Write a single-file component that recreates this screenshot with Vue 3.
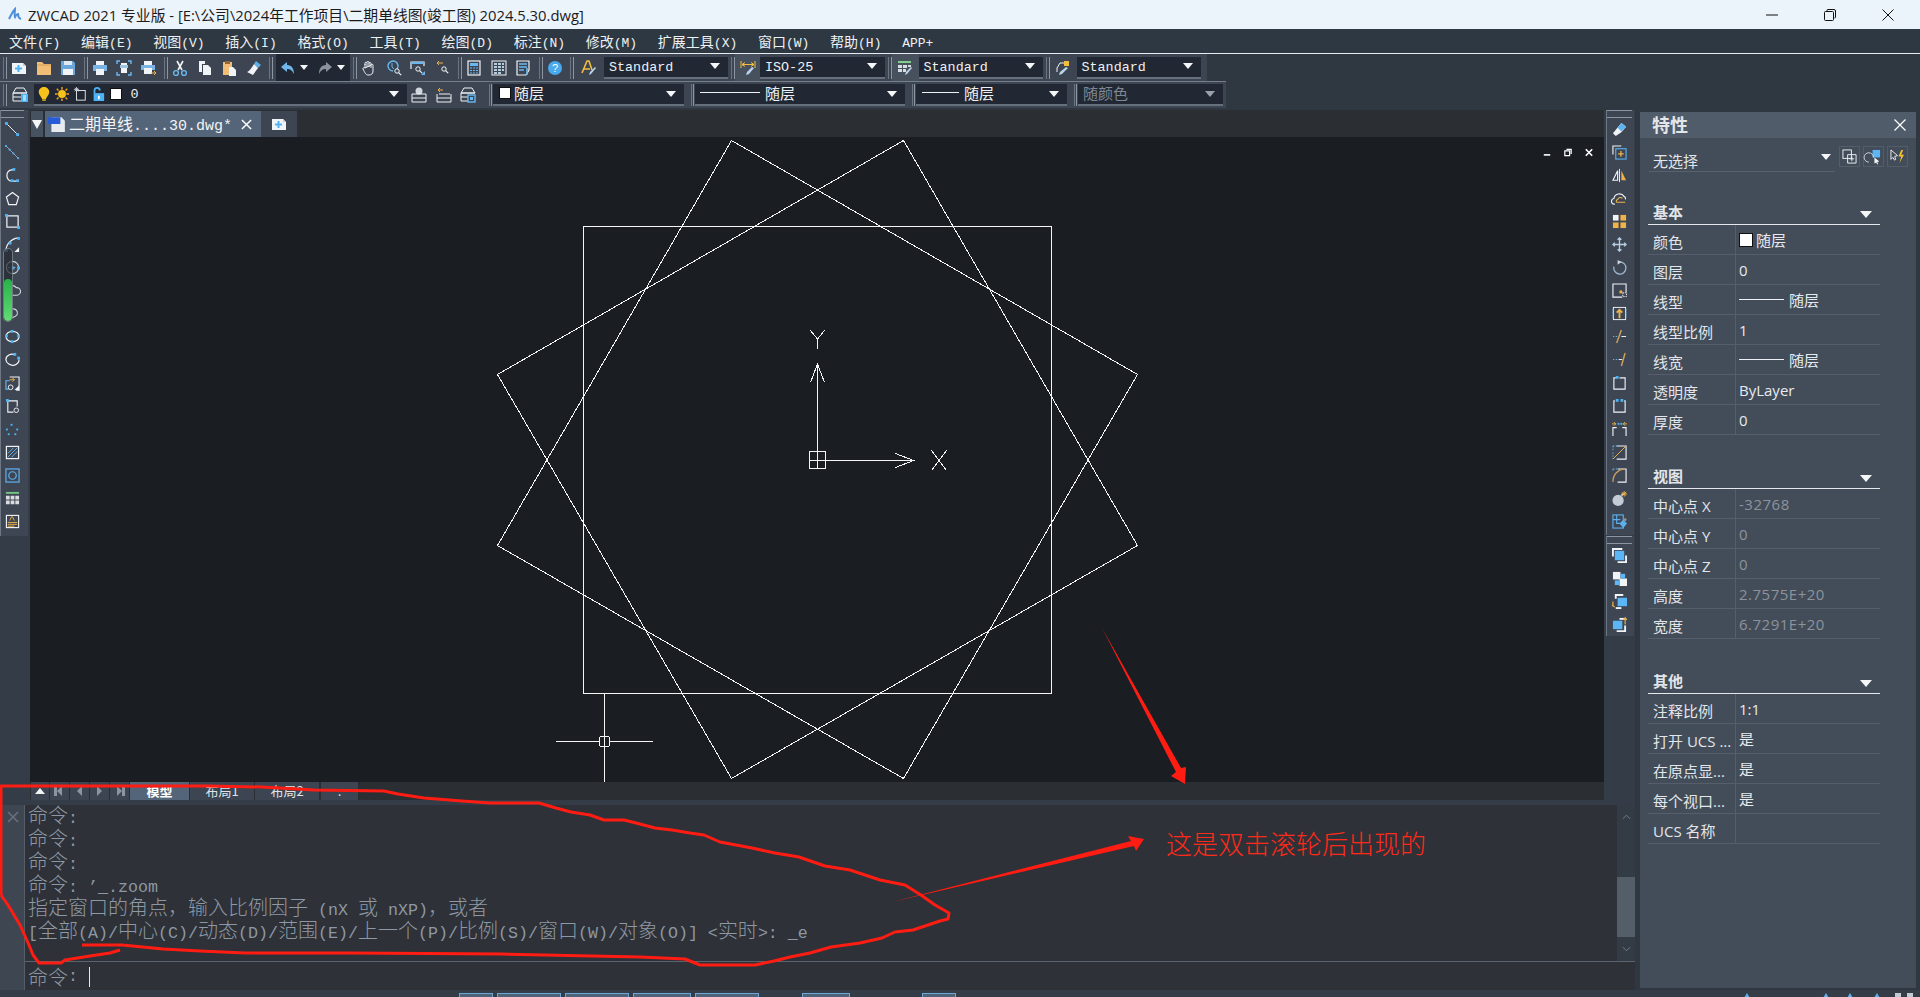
<script setup>
import { h } from 'vue'

const T = (p) =>
  (p.s.match(/[\u2E80-\uFFEF]+|[^\u2E80-\uFFEF]+/g) || []).map((t) =>
    h('span', { class: /[\u2E80-\uFFEF]/.test(t) ? 'cj' : 'la' }, t)
  )
T.props = ['s']

const W = '#f1f4f7'
const B = '#4db3f5'
const A = '#efb24a'
const S = (c = W, w = 1) => `fill="none" stroke="${c}" stroke-width="${w}"`
const dot = (x, y, c = B, s = 3) => `<rect x="${x}" y="${y}" width="${s}" height="${s}" fill="${c}"/>`

const brush = `<path d="M15 8l-5 6-2 1 1-3 5-5z" fill="#b9d3ea"/>`
const lens = (x, y, c = W) => `<circle cx="${x}" cy="${y}" r="2.2" ${S(c)}/><path d="M${x + 1.6} ${y + 1.6}l2.6 2.6" ${S(c, 1.2)}/>`

const icons = {
  new: `<path d="M1 3h11l3 3v8H1z" fill="${W}"/><path d="M12 3v3h3" fill="#c4ccd4"/><path d="M7.5 5v7M4 8.5h7" stroke="${B}" stroke-width="2"/>`,
  open: `<path d="M1 2h5l2 2h7v11H1z" fill="#f2bd76"/><path d="M1 5h14" stroke="#d69d54"/>`,
  save: `<path d="M1 1h12l2 2v12H1z" fill="#6aa6da"/><rect x="4" y="1" width="8" height="4" fill="#dfe9f2"/><rect x="3" y="9" width="10" height="6" fill="${W}"/>`,
  print: `<rect x="4" y="1" width="8" height="4" fill="${W}"/><rect x="1" y="5" width="14" height="6" fill="#79b4e4"/><rect x="4" y="9" width="8" height="6" fill="${W}"/>`,
  preview: `<path d="M1 4V1h3M12 1h3v3M1 12v3h3M12 15h3v-3" ${S('#6ab8ef', 1.4)}/><rect x="5" y="3" width="6" height="2" fill="${W}"/><rect x="4" y="5" width="8" height="3" fill="#9fc5e4"/><rect x="5" y="8" width="6" height="5" fill="${W}"/>`,
  plot: `<rect x="3" y="1" width="8" height="4" fill="${W}"/><rect x="0" y="5" width="14" height="5" fill="#79b4e4"/><rect x="3" y="8" width="8" height="6" fill="${W}"/><path d="M10 13h5m-2-2l2 2-2 2" ${S(A)}/>`,
  cut: `<path d="M5 1l5 9M11 1L6 10" ${S(W, 1.6)}/><circle cx="4" cy="13" r="2.4" ${S('#6ab8ef', 1.4)}/><circle cx="12" cy="13" r="2.4" ${S('#6ab8ef', 1.4)}/>`,
  copy: `<path d="M2 1h6v3H5v8H2z" fill="${W}"/><path d="M6 5h5l3 3v7H6z" fill="${W}"/>`,
  paste: `<rect x="2" y="2" width="9" height="13" fill="#f2bd76"/><rect x="4" y="1" width="5" height="3" fill="#8e6a3a"/><path d="M8 7h4l3 3v6H8z" fill="${W}"/>`,
  match: `<path d="M10 1l5 4-3 3-4-4z" fill="#5eaee8"/><path d="M8 4l4 4-5 7-6-3c3-1 5-5 7-8z" fill="${W}"/>`,
  undo: `<path d="M7 2L1 7l6 5V9c3 0 5 1 7 5 0-5-2-9-7-9z" fill="#6fb7ec"/>`,
  redo: `<path d="M9 2l6 5-6 5V9c-3 0-5 1-7 5 0-5 2-9 7-9z" fill="#8a929c"/>`,
  pan: `<path d="M4 8V4m0 1V3.2a1 1 0 012 0V7m0-4.5a1 1 0 012 0V7m0-3.5a1 1 0 012 0V8m0-2.8a1 1 0 012 0V11c0 3-2 4-4 4H7c-2 0-3-2-5-6-.5-1 1-2 2-1z" ${S()}/>`,
  zoomrt: `<path d="M11 9a5 5 0 10-4 2" ${S('#6ab8ef', 1.4)}/><path d="M6 3v4l2 2" ${S('#6ab8ef')}/>${lens(11, 11)}`,
  zoomw: `<path d="M1 9V2h13v4" ${S(W, 1.2)}/><path d="M1 2h13v2H1z" fill="#6ab8ef"/>${lens(8, 9)}<path d="M15 11v4h-4z" fill="#6ab8ef"/>`,
  zoomp: `<path d="M2 3h6M4 1L2 3l2 2" ${S(A)}/>${lens(9, 9)}`,
  calc: `<rect x="2" y="1" width="12" height="14" ${S(W, 1.2)}/><rect x="4" y="3" width="8" height="3" fill="#6ab8ef"/><path d="M4 8h8M4 10.5h8M4 13h8" stroke="#6ab8ef" stroke-dasharray="2 1"/>`,
  tool: `<rect x="1" y="1" width="14" height="14" ${S(W, 1)}/><path d="M3 3h3v2H3zM7 3h3v2H7zM11 3h2v2h-2zM3 6h3v2H3zM7 6h3v2H7zM11 6h2v2h-2zM3 9h3v2H3zM7 9h3v2H7zM11 9h2v2h-2zM3 12h3v2H3zM7 12h3v2H7z" fill="#b7cee0"/>`,
  prop: `<path d="M2 1h12v9l-3 5H2z" ${S(W, 1.2)}/><path d="M4 4h8M4 7h8M4 10h5" stroke="#6ab8ef" stroke-width="1.4"/><path d="M12 8v7" ${S('#6ab8ef', 1.6)}/>`,
  help: `<circle cx="8" cy="8" r="7" fill="#4aa8ec"/><text x="8" y="12" font-size="11" text-anchor="middle" fill="#fff" font-family="Liberation Sans">?</text>`,
  tstyle: `<path d="M1 13L6 1h2l3 9M3 9h6" ${S('#f3bd3f', 1.6)}/>${brush}`,
  dstyle: `<path d="M1 1v7M15 1v7M2 4.5h12M2 4.5l3-2M2 4.5l3 2M14 4.5l-3-2M14 4.5l-3 2" ${S('#f3bd3f')}/><path d="M14 8l-5 6-3 1 1-3 5-5z" fill="#b9d3ea"/>`,
  table: `<rect x="1" y="1" width="13" height="2" fill="#7fd08a"/><path d="M1 5h4v3H1zM6 5h4v3H6zM1 9h4v3H1zM6 9h3v3H6zM11 5h3v2h-3z" fill="#d8dde2"/>${brush}`,
  mlstyle: `<rect x="9" y="1" width="5" height="5" fill="#f3bd3f"/><path d="M9 3H5L2 8v4" ${S()}/><path d="M13 8l-6 6-3 1 1-3 6-5z" fill="#b9d3ea"/>`,
  layer: `<path d="M4 1h8l3 5H1zM1 6h14M1 10h8M1 14h8M1 6v8" ${S(W)}/><rect x="9" y="7" width="7" height="8" fill="#4db3f5"/><path d="M11 9h3M11 11h3M11 13h3" stroke="#fff"/>`,
  layerm: `<circle cx="8" cy="4" r="3.5" fill="#cfd6dd"/><path d="M1 7h14M1 11h14M1 15h14M1 7v8M15 7v8" ${S(W)}/>`,
  layerp: `<path d="M7 3H2m2-2L2 3l2 2" ${S(A)}/><path d="M3 7h11M1 11h14M1 15h14M1 7v8M15 7v8" ${S(W)}/>`,
  layers: `<path d="M4 1h8l3 5H1zM1 6h14M1 10h7M1 14h7M1 6v8" ${S(W)}/><rect x="8" y="8" width="7" height="7" ${S('#6ab8ef', 1.4)}/><rect x="10" y="10" width="3" height="3" fill="#6ab8ef"/>`,
  bulb: `<path d="M8 0c4 0 6 3 6 6 0 3-3 5-4 8H6C5 11 2 9 2 6c0-3 2-6 6-6z" fill="#f6c21c"/><rect x="6" y="14" width="4" height="2" fill="#c99a10"/>`,
  sun: `<circle cx="8" cy="8" r="4.5" fill="#f6c21c"/><path d="M8 0v3M8 13v3M0 8h3M13 8h3M2 2l2 2M12 12l2 2M14 2l-2 2M4 12l-2 2" stroke="#f6a21c" stroke-width="1.6"/>`,
  vp: `<rect x="4" y="4" width="10" height="11" ${S()}/><path d="M4 0v6M1 3h6M2 1l4 4M6 1L2 5" stroke="#cfd6dd"/>`,
  lock: `<path d="M4 7V4a3 3 0 016 0" ${S('#4db3f5', 2)}/><rect x="3" y="7" width="12" height="9" fill="#4db3f5"/><rect x="8" y="10" width="2" height="4" fill="#fff"/>`,

  l1: `<path d="M2 2l12 12" ${S()}/>${dot(0, 0)}${dot(12, 12)}`,
  l2: `<path d="M0 0l15 15" ${S('#bcd0e0', 0.7)}/>${dot(0, 0, B, 2)}${dot(4, 4, B, 2)}${dot(8, 8, B, 2)}${dot(13, 13, B, 2)}`,
  l3: `<path d="M9 2H7C4 2 2 5 2 8s2 6 5 6h6" ${S(W, 1.3)}/>${dot(8, 0)}${dot(6, 12)}${dot(12, 12)}`,
  l4: `<path d="M8 1.5l6.5 5-2.5 8H4l-2.5-8z" ${S(W, 1.3)}/>`,
  l5: `<rect x="2" y="2" width="12" height="12" ${S(W, 1.3)}/>${dot(0, 0)}${dot(13, 13)}`,
  l6: `<path d="M1 15C1 8 6 2 14 1" ${S(W, 1.3)}/>${dot(0, 13)}${dot(4, 5)}${dot(13, 0)}<path d="M15 11v5h-5z" fill="${W}"/>`,
  l7: `<circle cx="8" cy="8" r="6.5" ${S('#cfd6dd', 1.2)}/><path d="M3 8h10" stroke="${B}" stroke-dasharray="3 2"/>${dot(7, 7)}${dot(13, 7)}`,
  l8: `<path d="M3 13a3 3 0 010-6 5 5 0 019-2 4 4 0 011 8z" ${S('#cfd6dd', 1.2)}/>`,
  l9: `<path d="M3 3h6c3 0 5 3 4 6s-5 3-8 4" ${S('#cfd6dd', 1.2)}/>${dot(6, 2, B, 2)}`,
  l10: `<ellipse cx="8" cy="8" rx="7" ry="5.5" ${S(W, 1.3)}/>${dot(6, 1)}${dot(0, 6)}${dot(13, 6)}${dot(6, 12)}`,
  l11: `<path d="M11 3C6 1 1 4 1 8s5 7 9 6c3-1 5-3 5-6" ${S(W, 1.3)}/>${dot(9, 1)}${dot(13, 5)}`,
  l12: `<path d="M5 1h10v14h-3" ${S(W, 1.2)}/><path d="M5 5H1v9h3" ${S('#6ab8ef', 1.2)}/><path d="M5 4h5m-2-2l2 2-2 2" ${S(A)}/><circle cx="6" cy="12" r="2.5" ${S()}/><path d="M15 10v5h-5z" fill="${W}"/>`,
  l13: `<path d="M3 2h10v6M3 2v12h6" ${S(W, 1.2)}/>${dot(1, 0)}<circle cx="12" cy="12" r="2.4" ${S()}/>`,
  l14: `${dot(6, 2, B, 2)}${dot(1, 7, B, 2)}${dot(12, 7, B, 2)}${dot(3, 12, B, 2)}${dot(10, 12, B, 2)}`,
  l15: `<rect x="1.5" y="1.5" width="13" height="13" ${S(W, 1.3)}/><path d="M3 9l6-6M3 13L13 3M7 13l6-6" stroke="#6ab8ef"/>`,
  l16: `<rect x="1" y="1" width="14" height="14" ${S('#5cb0ee', 1.3)}/><circle cx="8" cy="8" r="4" ${S('#5cb0ee', 1.3)}/>`,
  l17: `<rect x="1" y="1" width="14" height="2" fill="#74c485"/><path d="M1 5h4v4H1zM6 5h4v4H6zM11 5h4v4h-4zM1 10h4v4H1zM6 10h4v4H6zM11 10h4v4h-4z" fill="#d9dde1"/>`,
  l18: `<rect x="1.5" y="1.5" width="13" height="13" ${S(W, 1.2)}/><path d="M5 7l2-4h1l2 4M3 9h10M3 11h10M3 13h7" ${S(A)}/>`,

  r1: `<path d="M10 1l5 4-5 6-6 4-3-3z" fill="${W}"/><path d="M10 1l5 4-5 5-4-4z" fill="#5eb4f2"/>`,
  r2: `<path d="M1 10V1h9" ${S(W, 1.2)}/><rect x="4" y="4" width="11" height="11" ${S('#5cb0ee', 1.2)}/><path d="M9.5 6.5v6M6.5 9.5h6" stroke="${A}" stroke-width="1.4"/>`,
  r3: `<path d="M1 13L6 3v10z" ${S(W, 1.2)}/><path d="M8 1v14" ${S()}/><path d="M10 3l5 10h-5z" fill="${A}"/>`,
  r4: `<path d="M3 14a3 3 0 01-1-6 6 6 0 0111-2c1 0 2 2 1 3" ${S(W, 1.2)}/><path d="M5 12c-1-1 0-3 1-3 1-2 4-3 5-1M5 12h9" ${S(A, 1.2)}/>`,
  r5: `<rect x="1" y="1" width="6" height="6" fill="${W}"/><rect x="9" y="1" width="6" height="6" fill="${A}"/><rect x="1" y="9" width="6" height="6" fill="${A}"/><rect x="9" y="9" width="6" height="6" fill="${A}"/>`,
  r6: `<path d="M8 1v14M1 8h14M6 3l2-2 2 2M6 13l2 2 2-2M3 6L1 8l2 2M13 6l2 2-2 2" ${S('#b6cde2', 1.4)}/>`,
  r7: `<path d="M8 2a6.5 6.5 0 11-6 5" ${S('#9fb7cf', 1.4)}/><path d="M6 0l4 2-4 3z" fill="#cfd8e1"/>`,
  r8: `<path d="M11 15H1V1h14v9" ${S(W, 1.2)}/>${dot(8, 8, A, 3)}<rect x="11.5" y="10.5" width="4" height="4" fill="none" stroke="${W}" stroke-dasharray="1.5 1"/>`,
  r9: `<rect x="1.5" y="1.5" width="13" height="13" fill="none" stroke="${W}"/><path d="M1 3v10M15 3v10" stroke="#6ab8ef" stroke-dasharray="2 1"/><path d="M8 13V5M5 7l3-3 3 3" ${S(A, 2)}/>`,
  r10: `<path d="M1 8h5" stroke="#6ab8ef" stroke-dasharray="1.5 1.5"/><path d="M10 8h5" ${S()}/><path d="M5 15L10 1" ${S('#c99f5c', 1.6)}/>`,
  r11: `<path d="M1 8h6" stroke="#6ab8ef" stroke-dasharray="1.5 1.5"/><path d="M7 8h4" ${S()}/><path d="M10 15L14 1" ${S('#c99f5c', 1.6)}/>`,
  r12: `<path d="M4 2H2v12h12V2H8" ${S(W, 1.2)}/>${dot(4, 0, B, 3)}`,
  r13: `<path d="M3 2H2v12h12V2h-1" ${S(W, 1.2)}/>${dot(4, 0, B, 3)}${dot(9, 0, B, 3)}`,
  r14: `<path d="M1 15V6h4M15 15V6h-4" ${S(W, 1.2)}/><path d="M0 2h4M2 0l2 2-2 2M16 2h-4M14 0l-2 2 2 2" ${S(A)}/>${dot(6, 1, B, 2)}${dot(9, 1, B, 2)}`,
  r15: `<path d="M5 15h10V1H5" ${S(W, 1.2)}/><path d="M1 1h6M1 1v6" stroke="#6ab8ef" stroke-dasharray="1.5 1.5"/><path d="M1 15L15 1" ${S(A)}/><path d="M1 8v7" stroke="#6ab8ef" stroke-dasharray="1.5 1.5"/>`,
  r16: `<path d="M6 15h9V1H6" ${S(W, 1.2)}/><path d="M1 1h8M1 1v3" stroke="#6ab8ef" stroke-dasharray="1.5 1.5"/><path d="M1 15C1 7 6 2 13 1" ${S('#c99f5c', 1.4)}/>`,
  r17: `<circle cx="6.5" cy="10" r="6" fill="#c3cbd4"/><path d="M10 5l2-2" stroke="#c3cbd4" stroke-width="2"/><path d="M13 0v6M10 3h6M11 1l4 4M15 1l-4 4" stroke="${A}"/>`,
  r18: `<rect x="1" y="1" width="11" height="14" ${S('#5cb0ee', 1.2)}/><path d="M1 6h8M5 1v9h4" ${S('#5cb0ee', 1.2)}/><path d="M8 10l4-4 4 4-4 5z" fill="#5cb0ee"/><path d="M12 6l2-2 2 2-2 2z" fill="#8a929c"/>`,
  o1: `<path d="M1 9V1h10" ${S(W, 2)}/><path d="M6 15h9V8" ${S(W, 2)}/><rect x="3" y="3" width="10" height="10" fill="#5cb6f6"/>`,
  o2: `<rect x="1" y="1" width="8" height="8" fill="${W}"/><rect x="8" y="8" width="8" height="8" fill="${W}"/><rect x="9" y="3" width="5" height="5" fill="#5cb6f6"/><rect x="3" y="10" width="5" height="5" fill="#5cb6f6"/>`,
  o3: `<path d="M4 5V1h8" ${S(W, 2)}/><path d="M4 15h6" ${S(W, 2)}/><rect x="6" y="4" width="10" height="9" fill="#5cb6f6"/><path d="M1 8v5m-1-1l3 2" ${S(A, 1.2)}/>`,
  o4: `<rect x="1" y="4" width="10" height="9" fill="#5cb6f6"/><path d="M5 15h9V9" ${S(W, 2)}/><path d="M8 2h6" ${S(W, 2)}/><path d="M14 8V1l-2 2m2-2l2 2" ${S(A, 1.2)}/>`,
  b1: `<rect x="1" y="1" width="9" height="9" ${S()}/><path d="M6 6h9v9H6z" ${S()}/><path d="M10.5 8v5M8 10.5h5" ${S()}/>`,
  b2: `<rect x="7" y="1" width="8" height="8" fill="#5cb6f6"/><path d="M8 9a5 5 0 10-5 5" ${S('#cfd6dd')}/><path d="M9 9l5 4-2 1 1 2-1 .5-1-2-2 1z" fill="${W}"/>`,
  b3: `<path d="M1 1l7 6-3 1 1 3-1 1-2-3-2 2z" ${S(W, 1)}/><path d="M12 1l-3 7h3l-2 7 5-9h-3l2-5z" fill="#f3c12c"/>`
}

const menus = ['文件(F)', '编辑(E)', '视图(V)', '插入(I)', '格式(O)', '工具(T)', '绘图(D)', '标注(N)', '修改(M)', '扩展工具(X)', '窗口(W)', '帮助(H)', 'APP+']
const leftTools = Array.from({ length: 18 }, (_, i) => 'l' + (i + 1))
const rightTools = Array.from({ length: 18 }, (_, i) => 'r' + (i + 1))
const orderTools = ['o1', 'o2', 'o3', 'o4']
const log = ['命令:', '命令:', '命令:', "命令: ’_.zoom", '指定窗口的角点，输入比例因子 (nX 或 nXP)，或者', '[全部(A)/中心(C)/动态(D)/范围(E)/上一个(P)/比例(S)/窗口(W)/对象(O)] <实时>: _e']
const sections = [
  { title: '基本', rows: [
    { k: '颜色', v: '随层', swatch: true },
    { k: '图层', v: '0' },
    { k: '线型', v: '随层', line: true },
    { k: '线型比例', v: '1' },
    { k: '线宽', v: '随层', line: true },
    { k: '透明度', v: 'ByLayer' },
    { k: '厚度', v: '0' }
  ] },
  { title: '视图', rows: [
    { k: '中心点 X', v: '-32768', dim: true },
    { k: '中心点 Y', v: '0', dim: true },
    { k: '中心点 Z', v: '0', dim: true },
    { k: '高度', v: '2.7575E+20', dim: true },
    { k: '宽度', v: '6.7291E+20', dim: true }
  ] },
  { title: '其他', rows: [
    { k: '注释比例', v: '1:1' },
    { k: '打开 UCS ...', v: '是' },
    { k: '在原点显...', v: '是' },
    { k: '每个视口...', v: '是' },
    { k: 'UCS 名称', v: '' }
  ] }
]
const statusBtns = [
  { w: 34, m: 459 }, { w: 64, m: 4 }, { w: 64, m: 4 }, { w: 58, m: 4 }, { w: 64, m: 4 }, { w: 48, m: 43 }, { w: 34, m: 72 }
]
const statusTips = [
  { m: 788 }, { m: 73 }, { m: 18 }, { m: 21 }, { m: 15, grey: true }, { m: 6, grey: true }
]
</script>

<template>
  <div class="page">
    <header class="title">
      <svg class="logo" viewBox="0 0 16 16">
        <path d="M2 12C4 8 6 4 8 2c0 3-1 6 0 8 1-2 2-3 3-3 0 2 0 4 3 5" fill="none" stroke="#4f8fd8" stroke-width="2" />
      </svg>
      <span class="title-text">ZWCAD 2021 专业版 - [E:\公司\2024年工作项目\二期单线图(竣工图) 2024.5.30.dwg]</span>
      <div class="win-btns">
        <svg viewBox="0 0 12 12" class="win"><path d="M0 6h12" stroke="#111" /></svg>
        <svg viewBox="0 0 12 12" class="win"><rect x=".5" y="2.5" width="9" height="9" rx="1" fill="none" stroke="#111" /><path d="M3 2.5V1.5a1 1 0 011-1h6a1.500 1.500 0 011.500 1.500v6a1 1 0 01-1 1" fill="none" stroke="#111" /></svg>
        <svg viewBox="0 0 12 12" class="win"><path d="M.5.5l11 11M11.500.5l-11 11" stroke="#111" /></svg>
      </div>
    </header>

    <nav class="menubar">
      <span v-for="m in menus" :key="m" class="menu-item"><T :s="m" /></span>
    </nav>

    <section class="toolbars">
      <div class="row row1">
        <i class="grip first"></i>
        <span v-for="n in ['new','open','save']" :key="n" class="cell"><svg class="ic" viewBox="0 0 16 16" v-html="icons[n]"></svg></span>
        <i class="grip"></i>
        <span v-for="n in ['print','preview','plot']" :key="n" class="cell"><svg class="ic" viewBox="0 0 16 16" v-html="icons[n]"></svg></span>
        <i class="grip"></i>
        <span v-for="n in ['cut','copy','paste','match']" :key="n" class="cell"><svg class="ic" viewBox="0 0 16 16" v-html="icons[n]"></svg></span>
        <i class="grip"></i>
        <div class="undo">
          <svg class="ic" viewBox="0 0 16 16" v-html="icons.undo"></svg><b class="tri small"></b>
          <svg class="ic redo" viewBox="0 0 16 16" v-html="icons.redo"></svg><b class="tri small"></b>
        </div>
        <i class="grip"></i>
        <span v-for="n in ['pan','zoomrt','zoomw','zoomp']" :key="n" class="cell"><svg class="ic" viewBox="0 0 16 16" v-html="icons[n]"></svg></span>
        <i class="grip"></i>
        <span v-for="n in ['calc','tool','prop']" :key="n" class="cell"><svg class="ic" viewBox="0 0 16 16" v-html="icons[n]"></svg></span>
        <i class="grip"></i>
        <span class="cell"><svg class="ic" viewBox="0 0 16 16" v-html="icons.help"></svg></span>
        <i class="grip"></i>
        <span class="cell style-cell w30"><svg class="ic" viewBox="0 0 16 16" v-html="icons.tstyle"></svg></span>
        <div class="combo w124"><T s="Standard" /><b class="tri"></b></div>
        <i class="grip"></i>
        <span class="cell style-cell w25"><svg class="ic" viewBox="0 0 16 16" v-html="icons.dstyle"></svg></span>
        <div class="combo w125"><T s="ISO-25" /><b class="tri"></b></div>
        <i class="grip"></i>
        <span class="cell style-cell w26"><svg class="ic" viewBox="0 0 16 16" v-html="icons.table"></svg></span>
        <div class="combo w124"><T s="Standard" /><b class="tri"></b></div>
        <i class="grip"></i>
        <span class="cell style-cell w27"><svg class="ic" viewBox="0 0 16 16" v-html="icons.mlstyle"></svg></span>
        <div class="combo w124"><T s="Standard" /><b class="tri"></b></div>
      </div>
      <div class="row row2">
        <i class="grip first"></i>
        <span class="cell w26"><svg class="ic" viewBox="0 0 16 16" v-html="icons.layer"></svg></span>
        <div class="combo layer-combo">
          <svg class="ic s14" viewBox="0 0 16 16" v-html="icons.bulb"></svg>
          <svg class="ic s14" viewBox="0 0 16 16" v-html="icons.sun"></svg>
          <svg class="ic s14" viewBox="0 0 16 16" v-html="icons.vp"></svg>
          <svg class="ic s14" viewBox="0 0 16 16" v-html="icons.lock"></svg>
          <i class="swatch"></i>
          <T s="0" />
          <b class="tri"></b>
        </div>
        <span v-for="n in ['layerm','layerp','layers']" :key="n" class="cell"><svg class="ic" viewBox="0 0 16 16" v-html="icons[n]"></svg></span>
        <i class="grip wide12"></i>
        <div class="combo w191"><i class="swatch"></i><T s="随层" /><b class="tri"></b></div>
        <i class="grip wide"></i>
        <div class="combo w210"><i class="lt long"></i><T s="随层" /><b class="tri"></b></div>
        <i class="grip wide"></i>
        <div class="combo w151"><i class="lt"></i><T s="随层" /><b class="tri"></b></div>
        <i class="grip wide"></i>
        <div class="combo w145 off"><T s="随颜色" /><b class="tri off"></b></div>
      </div>
    </section>

    <main class="main">
      <div class="work">
        <div class="upper">
          <aside class="side left">
            <div class="vbar lbar">
              <i class="hgrip tall"></i>
              <span v-for="n in leftTools" :key="n" class="vcell"><svg class="ic s15" viewBox="0 0 16 16" v-html="icons[n]"></svg></span>
              <div class="slider"><div class="slider-fill"></div></div>
            </div>
          </aside>

          <div class="center">
            <div class="doc-tabs">
              <span class="doc-menu"><b class="tri big"></b></span>
              <div class="doc-tab">
                <svg class="doc-ic" viewBox="0 0 16 16"><path d="M3 2h9l3 3v10H3z" fill="#e8ebee" /><rect x="0" y="2" width="11" height="6" fill="#2a5bd7" /></svg>
                <span class="doc-name"><T s="二期单线....30.dwg*" /></span>
                <svg class="doc-x" viewBox="0 0 12 12"><path d="M1 1l10 10M11 1L1 11" stroke="#fff" stroke-width="1.600" /></svg>
              </div>
              <span class="doc-add"><svg class="ic" viewBox="0 0 16 16" v-html="icons.new"></svg></span>
            </div>

            <div class="canvas">
              <svg class="draw" viewBox="30 137 1574 645" width="1574" height="645" shape-rendering="crispEdges">
                <g fill="none" stroke="#f4f4f4" stroke-width="1">
                  <rect x="583.500" y="226.500" width="468" height="467" />
                  <path d="M731.500 140.500L1137.500 374.500L903.500 778.500L497.500 545.500Z" />
                  <path d="M903.500 140.500L1137.500 545.500L731.500 778.500L497.500 374.500Z" />
                  <rect x="809.500" y="451.500" width="16" height="17" />
                  <path d="M817.500 451.500V468.500M809.500 460.500H825.500" />
                  <path d="M817.500 451.500V364M810.500 382.500L817.500 364L824.500 382.500" />
                  <path d="M825.500 460.500H913.500M895.500 453.500L913.500 460.500L895.500 467.500" />
                  <path d="M810.500 330.500L817.500 339L824.500 330.500M817.500 339V349" />
                  <path d="M931.500 450.500L946.500 470.500M946.500 450.500L931.500 470.500" />
                  <path d="M604.500 693.500V736.500M604.500 746.500V781.500M556 741.500H599M610 741.500H653" />
                  <rect x="599.500" y="736.500" width="10" height="10" rx="2" />
                  <path d="M604.500 736.500V746.500" />
                </g>
              </svg>
              <div class="doc-ctrl">
                <svg viewBox="0 0 10 10"><path d="M1 8h8" stroke="#fff" stroke-width="2" /></svg>
                <svg viewBox="0 0 10 10"><path d="M3 1h6v6M1 3h6v6H1z" fill="none" stroke="#fff" stroke-width="1.500" /></svg>
                <svg viewBox="0 0 10 10"><path d="M1 1l8 8M9 1L1 9" stroke="#fff" stroke-width="2" /></svg>
              </div>
            </div>

            <div class="layout-tabs">
              <span class="lbtn w18"><b class="up"></b></span>
              <span class="lbtn"><b class="nav first"></b></span>
              <span class="lbtn"><b class="nav"></b></span>
              <span class="lbtn"><b class="nav next"></b></span>
              <span class="lbtn"><b class="nav next last"></b></span>
              <span class="ltab active">模型</span>
              <span class="ltab">布局1</span>
              <span class="ltab">布局2</span>
              <span class="ltab more">:</span>
            </div>
            <div class="strip"></div>
          </div>

          <aside class="side right">
            <div class="vbar r1">
              <i class="hgrip tall"></i>
              <span v-for="n in rightTools" :key="n" class="vcell"><svg class="ic s15" viewBox="0 0 16 16" v-html="icons[n]"></svg></span>
            </div>
            <div class="vbar r2">
              <i class="hgrip tall"></i>
              <span v-for="n in orderTools" :key="n" class="vcell"><svg class="ic s15" viewBox="0 0 16 16" v-html="icons[n]"></svg></span>
            </div>
          </aside>
        </div>

        <section class="command">
          <div class="cmd-side">
            <svg viewBox="0 0 12 12"><path d="M1 1l10 10M11 1L1 11" stroke="#67717d" stroke-width="1.600" /></svg>
          </div>
          <div class="cmd-body">
            <div class="cmd-top">
              <div class="cmd-log">
                <div v-for="(l, i) in log" :key="i" class="cmd-line"><T :s="l" /></div>
              </div>
              <div class="cmd-scroll">
                <svg viewBox="0 0 10 6" class="chev"><path d="M1 5l4-4 4 4" fill="none" stroke="#7a8590" /></svg>
                <div class="thumb"></div>
                <svg viewBox="0 0 10 6" class="chev"><path d="M1 1l4 4 4-4" fill="none" stroke="#7a8590" /></svg>
              </div>
            </div>
            <div class="cmd-input"><T s="命令:" /><i class="caret"></i></div>
          </div>
        </section>

        <footer class="status">
          <span v-for="(b, i) in statusBtns" :key="i" class="sbtn" :style="{ width: b.w + 'px', marginLeft: b.m + 'px' }"></span>
          <span v-for="(t, i) in statusTips" :key="'t' + i" class="stip" :class="{ grey: t.grey }" :style="{ marginLeft: t.m + 'px' }"></span>
        </footer>
      </div>

      <aside class="panel">
        <div class="panel-head">
          <span>特性</span>
          <svg viewBox="0 0 12 12"><path d="M.5.5l11 11M11.500.5l-11 11" stroke="#fff" stroke-width="1.200" /></svg>
        </div>
        <div class="panel-sel">
          <div class="sel-box"><span>无选择</span><b class="tri"></b></div>
          <span class="pbtn"><svg class="ic" viewBox="0 0 16 16" v-html="icons.b1"></svg></span>
          <span class="pbtn"><svg class="ic" viewBox="0 0 16 16" v-html="icons.b2"></svg></span>
          <span class="pbtn"><svg class="ic" viewBox="0 0 16 16" v-html="icons.b3"></svg></span>
        </div>
        <div v-for="s in sections" :key="s.title" class="sect">
          <div class="sect-head"><span>{{ s.title }}</span><b class="tri wide-tri"></b></div>
          <div v-for="r in s.rows" :key="r.k" class="prop">
            <span class="prop-k">{{ r.k }}</span>
            <span class="prop-v" :class="{ dim: r.dim }">
              <i v-if="r.swatch" class="swatch outlined"></i>
              <i v-if="r.line" class="lt plain"></i>{{ r.v }}
            </span>
          </div>
        </div>
      </aside>
    </main>

    <svg class="annot" viewBox="0 0 1920 997" width="1920" height="997">
      <path fill="none" stroke="#ff1c12" stroke-width="3" stroke-linejoin="round"
        d="M1 895V786H208L262 787L314 790L384 791L398 794L424 798L462 801L490 803L539 803L556 808L571 812L590 815L604 820L624 820L640 824L655 828L672 830L690 833L704 835L720 842L752 848L775 853L799 857L825 866L850 870L880 880L905 885L921 895L935 905L949 913L948 919L940 921L925 926L913 930L895 932L882 938L860 943L831 947L810 953L790 957L774 961L755 965L700 965L685 959L640 957L502 954L351 953L245 953L200 951L163 949L122 945L82 945" />
      <path fill="none" stroke="#ff1c12" stroke-width="3" stroke-linejoin="round"
        d="M120 950L110 953L90 956L65 960L61 963L39 963L33 955L29 945L20 925L8 905L1 895" />
      <polygon fill="#ff1c12" points="1102,628 1181,768 1186,767 1185,784 1171,776 1176,772" />
      <polygon fill="#ff1c12" points="892,902 1131,841 1128,836 1144,839 1136,851 1134,846" />
    </svg>
    <div class="note">这是双击滚轮后出现的</div>
  </div>
</template>

<style>
html, body { margin: 0; background: #2f3741; }
.la { font-family: "Liberation Mono", monospace; font-size: .8333em; }
.cj { font-family: "Noto Sans CJK SC", sans-serif; }
.menu-item .la { font-size: 13px; }
.combo .la { font-size: 13.4px; }
.doc-name .la { font-size: 15px; }
</style>

<style scoped>
.page {
  position: relative;
  width: 1920px;
  height: 997px;
  overflow: hidden;
  background: #2f3741;
  display: flex;
  flex-direction: column;
  font-family: "Open Sans", "Noto Sans CJK SC", sans-serif;
  color: #e6eaee;
}
.title {
  height: 29px;
  background: #ebf3fb;
  display: flex;
  align-items: center;
  flex: none;
}
.logo { width: 16px; height: 16px; margin: 0 5px 0 7px; }
.title-text { font-size: 14.800px; color: #1b1b1b; white-space: nowrap; }
.win-btns { margin-left: auto; display: flex; gap: 46px; padding-right: 26px; }
.win { width: 12px; height: 12px; }

.menubar {
  height: 24px;
  flex: none;
  background: #2e3842;
  border-bottom: 1px solid #e8ecf0;
  display: flex;
  align-items: center;
  padding-left: 9px;
  font-size: 14px;
  color: #eef1f4;
  gap: 20.700px;
}
.menu-item { white-space: nowrap; }

.toolbars { height: 54px; flex: none; }
.row { display: flex; align-items: center; height: 27px; background: #3c4551; }
.row1 { width: 1207px; }
.row2 { width: 1226px; border-top: 1px solid #76808c; height: 26px; }
.grip {
  flex: none;
  width: 7px;
  height: 22px;
  box-sizing: border-box;
  border-right: 1.500px solid #8c96a2;
  position: relative;
  margin-right: 0;
}
.grip::after {
  content: "";
  position: absolute;
  right: 2px;
  top: 0;
  bottom: 0;
  width: 1px;
  background: #6c7682;
}
.grip.first { width: 5px; margin-left: 2px; border-right-width: 1px; }
.grip.wide { width: 11px; padding: 0; border-right: 0; }
.grip.wide::after { right: 3px; box-shadow: 2px 0 #8c96a2; }
.grip.wide12 { width: 12.500px; border-right: 0; }
.grip.wide12::after { right: 3px; box-shadow: 2px 0 #8c96a2; }
.cell { flex: none; width: 24.500px; display: flex; justify-content: center; align-items: center; }
.style-cell { height: 100%; background: #47515e; }
.w30 { width: 30px; background: none; }
.w25 { width: 25px; }
.w26 { width: 26.500px; }
.w27 { width: 27px; background: none; }
.ic { width: 16px; height: 16px; display: block; flex: none; overflow: visible; }
.s14 { width: 14px; height: 14px; margin-right: 4px; }
.s15 { width: 15px; height: 15px; }
.undo {
  flex: none;
  width: 74px;
  height: 27px;
  margin-left: 3px;
  background: #222833;
  display: flex;
  align-items: center;
  padding-left: 4px;
  box-sizing: border-box;
}
.redo { margin-left: 8.500px; }
.tri {
  display: block;
  width: 0;
  height: 0;
  border-style: solid;
  border-width: 6px 5px 0;
  border-color: #f4f6f8 transparent transparent;
  flex: none;
}
.tri.small { margin-left: 4px; border-width: 5px 4px 0; }
.tri.off { border-top-color: #9aa1a8; }
.combo {
  flex: none;
  box-sizing: border-box;
  height: 22px;
  background: #222833;
  border-bottom: 2px solid #66707c;
  display: flex;
  align-items: center;
  padding: 0 8px 0 5px;
  font-size: 15px;
  color: #eef1f4;
  white-space: nowrap;
}
.row1 .combo { padding-top: 2px; }
.row2 .combo { padding-bottom: 3px; }
.combo > .tri { margin-left: auto; }
.row1 .combo > .tri { margin-top: -3px; }
.row2 .combo > .tri { margin-top: 3px; }
.w124 { width: 124px; }
.w125 { width: 125px; }
.w191 { width: 191px; padding-left: 6px; margin-left: 0; }
.w210 { width: 210px; padding-left: 5px; }
.w151 { width: 151px; padding-left: 6px; }
.w145 { width: 145px; padding-left: 5px; }
.off { color: #7e8792; }
.row2 .layer-combo { width: 373.500px; padding: 0 8px 0 3px; }
.row2 .layer-combo > .tri { margin-top: 0; }
.swatch { display: block; flex: none; width: 10px; height: 10px; background: #fff; border: 1px solid #111; margin-right: 3px; }
.layer-combo .swatch { margin: 0 9px 0 1px; }
.lt { display: block; flex: none; width: 37px; height: 1px; background: #eef1f4; margin-right: 5px; }
.lt.long { width: 60px; margin-right: 5px; }

.main { flex: 1; min-height: 0; display: flex; margin-top: 2px; }
.work { width: 1635px; flex: none; display: flex; flex-direction: column; }
.upper { height: 695px; flex: none; display: flex; }
.side { flex: none; width: 30px; background: #333c47; display: flex; flex-direction: column; align-items: flex-start; }
.side.right { width: 31px; padding-left: 2px; box-sizing: border-box; }
.vbar {
  position: relative;
  width: 28px;
  box-sizing: border-box;
  background: #3e4653;
  border-left: 1px solid #6e7884;
  padding-bottom: 3px;
  padding-right: 2px;
}
.vbar.lbar { padding-right: 4px; }
.vbar.r1 { padding-bottom: 2px; }
.vbar.r2 { margin-top: 1px; padding-bottom: 0; }
.hgrip {
  display: block;
  height: 3.500px;
  box-sizing: border-box;
  border-top: 1px solid #8c96a2;
  border-bottom: 1px solid #8c96a2;
}
.hgrip.tall { height: 7.500px; }
.vcell { display: flex; align-items: center; justify-content: center; height: 23.100px; }
.slider {
  position: absolute;
  left: 2px;
  top: 138px;
  width: 10px;
  height: 74px;
  box-sizing: border-box;
  border: 1px solid rgba(170, 178, 186, .55);
  border-radius: 5px;
  background: rgba(36, 42, 50, .7);
  overflow: hidden;
  display: flex;
  align-items: flex-end;
}
.slider-fill { width: 100%; height: 42px; border-radius: 4px; background: linear-gradient(#27b14a, #62dc74); }

.center { width: 1574px; flex: none; display: flex; flex-direction: column; background: #2b2e33; }
.doc-tabs { height: 27px; flex: none; display: flex; align-items: stretch; padding: 1px 0 0 1px; box-sizing: border-box; }
.doc-menu { width: 12px; background: #46525f; display: flex; align-items: center; justify-content: center; margin-right: 2px; }
.tri.big { border-width: 9px 5px 0; }
.doc-tab {
  width: 216px;
  background: #54657a;
  display: flex;
  align-items: center;
  padding-left: 3px;
  box-sizing: border-box;
}
.doc-ic { width: 18px; height: 18px; flex: none; }
.doc-name { margin-left: 3px; padding-bottom: 3px; font-size: 16px; color: #f2f4f6; white-space: nowrap; }
.doc-x { width: 11px; height: 11px; margin-left: auto; margin-right: 9px; }
.doc-add { width: 36px; background: #3c4551; display: flex; align-items: center; justify-content: center; }
.canvas { position: relative; height: 645px; flex: none; background: #1a1e23; overflow: hidden; }
.draw { position: absolute; left: 0; top: 0; display: block; }
.doc-ctrl { position: absolute; right: 11px; top: 11px; display: flex; gap: 13px; }
.doc-ctrl svg { width: 8px; height: 9px; }
.layout-tabs { height: 18px; flex: none; display: flex; gap: 1px; padding-left: 1px; font-size: 13px; }
.lbtn {
  width: 19px;
  background: #3c4551;
  display: flex;
  align-items: center;
  justify-content: center;
  position: relative;
}
.w18 { width: 18px; }
.up { width: 0; height: 0; border-style: solid; border-width: 0 5px 6px; border-color: transparent transparent #f2f4f6; }
.nav { width: 0; height: 0; border-style: solid; border-width: 5px 5px 5px 0; border-color: transparent #8b95a0 transparent transparent; }
.nav.first { box-shadow: -3px 0 #8b95a0; }
.nav.next { border-width: 5px 0 5px 5px; border-color: transparent transparent transparent #8b95a0; }
.nav.last { box-shadow: 3px 0 #8b95a0; }
.ltab { width: 64px; background: #3c4551; text-align: center; line-height: 18px; color: #dfe3e7; font-family: "Noto Sans CJK SC", sans-serif; }
.ltab.active { width: 59px; background: #54657a; color: #fff; font-weight: 700; }
.ltab.more { width: 37px; margin-left: 1px; }
.strip { height: 5px; flex: none; background: #333c47; }

.command { height: 185px; flex: none; display: flex; background: #2e3137; font-size: 20px; color: #8d98a4; }
.cmd-side { width: 24px; flex: none; background: #3e4652; border-right: 1px solid #555e69; box-sizing: content-box; }
.cmd-side svg { display: block; width: 12px; height: 12px; margin: 6px 0 0 7px; }
.cmd-body { flex: 1; min-width: 0; display: flex; flex-direction: column; }
.cmd-top { height: 156px; flex: none; display: flex; border-bottom: 1px solid #5a6470; }
.cmd-log { flex: 1; margin-top: -2px; padding: 0 0 0 3px; font-weight: 300; }
.cmd-line { height: 23px; line-height: 23px; white-space: pre; }
.cmd-scroll {
  width: 18px;
  flex: none;
  background: #333b45;
  display: flex;
  flex-direction: column;
  align-items: center;
}
.chev { width: 9px; height: 6px; margin: 9px 0; flex: none; }
.thumb { width: 100%; height: 62px; margin-top: 48px; margin-bottom: 0; background: #545e69; }
.cmd-input { flex: 1; display: flex; align-items: center; padding: 0 0 2px 3px; font-weight: 300; white-space: pre; }
.caret { width: 1px; height: 20px; background: #e8ebee; margin-left: 11px; }
.status { flex: 1; background: #333c47; display: flex; padding-top: 3px; overflow: hidden; width: 1920px; }
.sbtn { flex: none; height: 12px; box-sizing: border-box; border: 1px solid #6aa8d8; background: #4e6378; }
.stip { flex: none; width: 0; height: 0; border-style: solid; border-width: 0 3px 5px; border-color: transparent transparent #5cb0ee; }
.stip.grey { width: 6px; height: 6px; border: 0; background: #c3cad1; }

.panel {
  width: 276px;
  height: 876px;
  flex: none;
  margin: 2px 0 0 5px;
  background: #434c59;
  font-size: 15px;
  color: #e2e6ea;
  font-family: "Open Sans", "Noto Sans CJK SC", sans-serif;
}
.panel-head {
  height: 26px;
  box-sizing: border-box;
  background: #515c6a;
  display: flex;
  align-items: center;
  justify-content: space-between;
  padding: 0 10px 2px 12px;
  font-size: 18px;
  font-weight: 700;
}
.panel-head svg { width: 12px; height: 12px; margin-top: 2px; }
.panel-sel { display: flex; align-items: flex-start; margin-top: 8px; padding-left: 9px; height: 26px; }
.sel-box {
  width: 186px;
  height: 26px;
  box-sizing: border-box;
  border-bottom: 1px solid #58626e;
  display: flex;
  align-items: center;
  padding: 4px 4px 0 4px;
  margin-right: 4px;
}
.sel-box .tri { margin-left: auto; margin-top: -8px; }
.pbtn {
  width: 21px;
  height: 21px;
  box-sizing: border-box;
  border: 1px solid #535d69;
  margin-right: 3px;
  display: flex;
  align-items: center;
  justify-content: center;
}
.pbtn .ic { width: 15px; height: 15px; }
.sect { margin: 28px 0 0 8px; width: 232px; }
.sect + .sect { margin-top: 29px; }
.sect:last-child { margin-top: 30px; }
.sect-head {
  height: 25px;
  box-sizing: border-box;
  border-bottom: 1px solid #e6e9ec;
  display: flex;
  align-items: center;
  justify-content: space-between;
  padding: 0 8px 2px 5px;
  font-weight: 700;
}
.tri.wide-tri { border-width: 7px 6px 0; margin-top: 6px; }
.prop { display: flex; height: 30px; box-sizing: border-box; border-bottom: 1px solid #555e6a; }
.prop-k {
  width: 87px;
  flex: none;
  box-sizing: border-box;
  padding: 4px 0 0 5px;
  white-space: nowrap;
  line-height: 26px;
  overflow: hidden;
}
.prop-v {
  flex: 1;
  border-left: 1px solid #555e6a;
  padding-left: 3px;
  line-height: 24px;
  display: flex;
  align-items: center;
  height: 29px;
  color: #e6eaee;
}
.prop-v.dim { color: #8b939d; letter-spacing: .5px; }
.swatch.outlined { width: 12px; height: 12px; margin-right: 3px; }
.lt.plain { width: 45px; margin-right: 5px; }

.annot { position: absolute; left: 0; top: 0; pointer-events: none; }
.note {
  position: absolute;
  left: 1166px;
  top: 824px;
  font-size: 26px;
  line-height: 38px;
  color: #ff2a1a;
  font-family: "Noto Sans CJK SC", sans-serif;
  font-weight: 300;
  white-space: nowrap;
}
</style>
